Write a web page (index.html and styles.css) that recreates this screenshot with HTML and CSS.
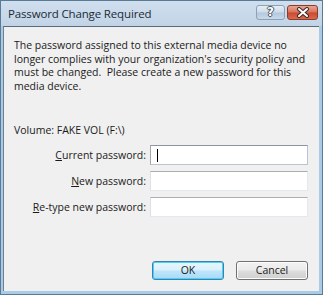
FILE: index.html
```html
<!DOCTYPE html>
<html>
<head>
<meta charset="utf-8">
<link rel="stylesheet" href="styles.css">
</head>
<body>
<div class="window">
  <div class="titlebar">
    <span class="title">Password Change Required</span>
    <div class="caption-buttons">
      <div class="cap-btn help"><span class="q">?</span></div>
      <div class="cap-btn close">
        <svg width="14" height="11" viewBox="0 0 14 11"><path d="M3 2 L11 9 M11 2 L3 9" stroke="#3a2a2a" stroke-width="4" stroke-linecap="round"/><path d="M3 2 L11 9 M11 2 L3 9" stroke="#ffffff" stroke-width="2" stroke-linecap="round"/></svg>
      </div>
    </div>
  </div>
  <div class="client">
    <p class="message">The password assigned to this external media device no<br>longer complies with your organization's security policy and<br>must be changed.&nbsp; Please create a new password for this<br>media device.</p>
    <p class="volume">Volume: FAKE VOL (F:\)</p>
    <div class="form">
      <label class="lbl"><u>C</u>urrent password:</label>
      <div class="field focused"><span class="caret"></span></div>
      <label class="lbl"><u>N</u>ew password:</label>
      <div class="field"></div>
      <label class="lbl"><u>R</u>e-type new password:</label>
      <div class="field"></div>
    </div>
    <div class="buttons">
      <div class="btn default">OK</div>
      <div class="btn">Cancel</div>
    </div>
  </div>
</div>
</body>
</html>
```
FILE: styles.css
```css
html, body {
  margin: 0;
  padding: 0;
  background: #ffffff;
}
.window {
  width: 323px;
  height: 295px;
  box-sizing: border-box;
  background: #a9cbe6;
  border: 1px solid #5a7a95;
  display: flex;
  flex-direction: column;
  font-family: "Open Sans", "Noto Sans", sans-serif;
  color: #1a1a1a;
}
.titlebar {
  height: 25px;
  flex: none;
  display: flex;
  align-items: flex-start;
  justify-content: space-between;
  background: linear-gradient(#d0dfee, #c1d4e6);
  padding: 0 4px 0 7px;
}
.title {
  font-size: 11.5px;
  letter-spacing: -0.15px;
  line-height: 25px;
  color: #1d2a36;
}
.caption-buttons {
  display: flex;
  gap: 2px;
  padding-top: 4px;
}
.cap-btn {
  width: 29px;
  height: 15px;
  border-radius: 3px;
  box-sizing: border-box;
  display: flex;
  align-items: center;
  justify-content: center;
}
.help {
  background: linear-gradient(#e6eef6 0%, #cddbea 48%, #b3c8dc 52%, #c8d9ea 100%);
  border: 1px solid #8aa2b8;
}
.q {
  font-family: "DejaVu Sans", sans-serif;
  font-weight: bold;
  font-size: 12px;
  line-height: 13px;
  color: #ffffff;
  text-shadow: -1px 0 #4a5560, 1px 0 #4a5560, 0 -1px #4a5560, 0 1px #4a5560;
}
.close {
  width: 31px;
  background: linear-gradient(#e9a592 0%, #d9725a 48%, #c74a30 52%, #d96b4e 100%);
  border: 1px solid #8c3a2a;
}
.client {
  flex: 1;
  margin: 0 3px 3px 2px;
  background: #f0f0f0;
  border-top: 1px solid #5b6b7a;
  border-left: 1px solid #6f7f8e;
  display: flex;
  flex-direction: column;
  padding: 0 11px 11px 10px;
  font-size: 10.5px;
}
.message {
  margin: 12px 0 0 0;
  line-height: 13.7px;
  white-space: nowrap;
}
.volume {
  margin: 29px 0 0 0;
  line-height: 14px;
}
.form {
  display: grid;
  grid-template-columns: 132px 158px;
  column-gap: 4px;
  row-gap: 6px;
  margin-top: 8px;
  align-items: center;
}
.lbl {
  text-align: right;
  line-height: 14px;
}
.field {
  height: 20px;
  box-sizing: border-box;
  background: #ffffff;
  border: 1px solid #e3e9ef;
  border-top-color: #abadb3;
  border-left-color: #dbdfe6;
  position: relative;
}
.field.focused {
  border-color: #b8c4d0;
  border-top-color: #8c97a3;
  border-left-color: #a0a8b0;
}
.caret {
  position: absolute;
  left: 6px;
  top: 3px;
  width: 1px;
  height: 13px;
  background: #000;
}
.buttons {
  margin-top: auto;
  display: flex;
  justify-content: flex-end;
  gap: 12px;
}
.btn {
  width: 72px;
  height: 19px;
  box-sizing: border-box;
  border: 1px solid #707070;
  border-radius: 3px;
  background: linear-gradient(#f2f2f2 0%, #ebebeb 48%, #dddddd 52%, #cfcfcf 100%);
  text-align: center;
  line-height: 17px;
  box-shadow: inset 0 0 0 1px #fcfcfc;
}
.btn.default {
  border-color: #3c7fb1;
  box-shadow: inset 0 0 0 1px #48d2f4;
  background: linear-gradient(#eaf6fd 0%, #d9f0fc 48%, #bee6fd 52%, #a7d9f5 100%);
}
```
